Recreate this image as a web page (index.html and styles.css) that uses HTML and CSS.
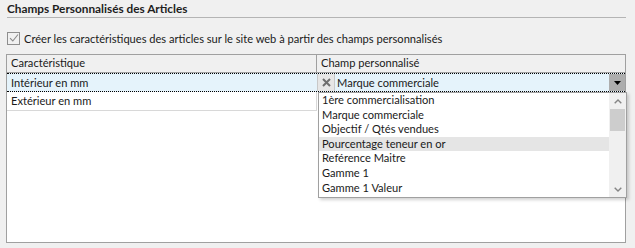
FILE: index.html
```html
<!DOCTYPE html>
<html>
<head>
  <title>Champs Personnalisés des Articles</title>
  <link rel="stylesheet" href="styles.css">
</head>
<body>
  <div class="panel">
    <div class="heading">
      <span class="heading-text">Champs Personnalisés des Articles</span>
      <span class="heading-line"></span>
    </div>

    <label class="check-row">
      <span class="check-box">
        <svg width="10" height="10" viewBox="0 0 10 10"><path d="M1 5.2 L3.8 8 L9 1.5" fill="none" stroke="#8a8a8a" stroke-width="1.1"/></svg>
      </span>
      <span>Créer les caractéristiques des articles sur le site web à partir des champs personnalisés</span>
    </label>

    <div class="grid">
      <div class="grid-head">
        <div class="cell col-a">Caractéristique</div>
        <div class="cell col-b">Champ personnalisé</div>
      </div>
      <div class="grid-row current">
        <div class="cell col-a">Intérieur en mm</div>
        <div class="combo">
          <span class="combo-clear">
            <svg width="9" height="9" viewBox="0 0 9 9"><path d="M1 1 L8 8 M8 1 L1 8" stroke="#6e6e6e" stroke-width="2"/></svg>
          </span>
          <span class="combo-value">Marque commerciale</span>
          <span class="combo-btn">
            <svg width="7" height="4" viewBox="0 0 7 4"><path d="M0 0 H7 L3.5 4 Z" fill="#000"/></svg>
          </span>
        </div>
      </div>
      <div class="grid-row">
        <div class="cell col-a bottom">Extérieur en mm</div>
        <div class="cell col-b"></div>
      </div>

      <div class="dropdown">
        <ul class="options">
          <li>1ère commercialisation</li>
          <li>Marque commerciale</li>
          <li>Objectif / Qtés vendues</li>
          <li class="hover">Pourcentage teneur en or</li>
          <li>Reférence Maitre</li>
          <li>Gamme 1</li>
          <li>Gamme 1 Valeur</li>
        </ul>
        <div class="scrollbar">
          <span class="arrow">
            <svg width="8" height="5" viewBox="0 0 8 5"><path d="M0.7 4.3 L4 1 L7.3 4.3" fill="none" stroke="#858585" stroke-width="1.4"/></svg>
          </span>
          <span class="thumb"></span>
          <span class="track"></span>
          <span class="arrow">
            <svg width="8" height="5" viewBox="0 0 8 5"><path d="M0.7 0.7 L4 4 L7.3 0.7" fill="none" stroke="#858585" stroke-width="1.4"/></svg>
          </span>
        </div>
      </div>
    </div>
  </div>
</body>
</html>
```

FILE: styles.css
```css
body {
    margin: 0;
    background-color: #f0f0f0;
    font-family: Lato, "Open Sans", sans-serif;
    font-size: 11.1px;
    color: #1a1a1a;
}

.panel {
    padding: 1px 9px 6px 5px;
}

.heading {
    display: flex;
    flex-direction: column;
    padding-left: 2px;
    height: 19px;
}
.heading-text {
    font-weight: bold;
    font-size: 11.8px;
    line-height: 16px;
    color: #1e1e1e;
}
.heading-line {
    display: block;
    height: 1px;
    background-color: #b4b4b4;
}

.check-row {
    display: flex;
    align-items: center;
    gap: 4px;
    padding-left: 2px;
    margin-top: 11px;
    height: 14px;
}
.check-box {
    width: 11px;
    height: 11px;
    border: 1px solid #8e8e8e;
    background-color: #f0f0f0;
    display: flex;
    align-items: center;
    justify-content: center;
}

.grid {
    position: relative;
    margin-top: 9px;
    margin-left: 1px;
    height: 187px;
    border: 1px solid #a0a0a0;
    background-color: #fff;
}

.grid-head,
.grid-row {
    display: grid;
    grid-template-columns: 310px 1fr;
}
.grid-head {
    height: 17px;
    background-color: #f0f0f0;
    border-bottom: 1px solid #a0a0a0;
}
.grid-head .col-a {
    border-right: 1px solid #a0a0a0;
}

.cell {
    padding-left: 4px;
    line-height: 16px;
    white-space: nowrap;
}

.grid-row {
    height: 19px;
}
.grid-row .cell {
    line-height: 18px;
}
.grid-row.current {
    background-color: #e5f3fb;
    border-top: 1px dotted #000;
    border-bottom: 1px dotted #000;
    height: 17px;
}
.grid-row.current .cell {
    line-height: 17px;
}
.grid-row .bottom {
    border-bottom: 1px solid #d8d8d8;
    border-right: 1px solid #d8d8d8;
}

.combo {
    display: flex;
    align-items: stretch;
    border-left: 1px solid #c8c8c8;
}
.combo-clear {
    width: 16px;
    display: flex;
    align-items: center;
    justify-content: center;
    background-color: #e6e6e6;
    border-right: 1px solid #c8c8c8;
}
.combo-value {
    flex: 1;
    padding-left: 2px;
    line-height: 17px;
}
.combo-btn {
    width: 16px;
    display: flex;
    align-items: center;
    justify-content: center;
    background-color: #adadad;
}

.dropdown {
    position: absolute;
    left: 311px;
    top: 37px;
    width: 307px;
    height: 104px;
    display: flex;
    background-color: #fff;
    border: 1px solid #a0a0a0;
    box-shadow: 2px 2px 3px rgba(0, 0, 0, 0.18);
}
.options {
    list-style: none;
    margin: 0;
    padding: 0;
    flex: 1;
}
.options li {
    height: 14.6px;
    line-height: 14px;
    padding-left: 3px;
    white-space: nowrap;
}
.options li.hover {
    background-color: #e5e5e5;
}

.scrollbar {
    width: 17px;
    display: flex;
    flex-direction: column;
    background-color: #f0f0f0;
}
.scrollbar .arrow {
    height: 16px;
    display: flex;
    align-items: center;
    justify-content: center;
}
.scrollbar .thumb {
    height: 22px;
    margin: 0 1px;
    background-color: #cdcdcd;
}
.scrollbar .track {
    flex: 1;
}
```
